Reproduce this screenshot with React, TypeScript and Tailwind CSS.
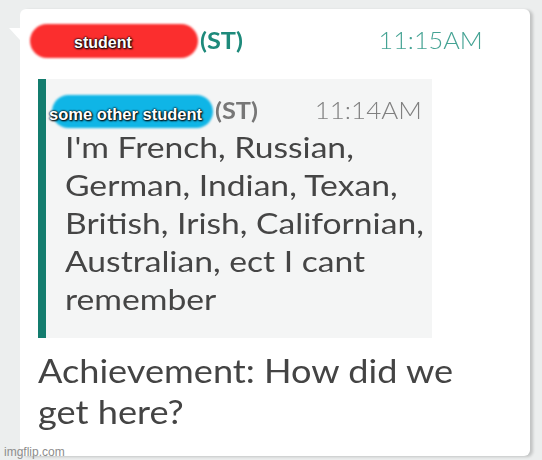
import React from "react";

const lato = { fontFamily: "Lato, 'Open Sans', sans-serif" };
const label = {
  fontFamily: "'Liberation Sans', Arial, sans-serif",
  textShadow: "0 0 2px #000, 0 0 2px #000, 1px 1px 2px #000",
};

export default function App() {
  return (
    <div className="relative w-[542px] h-[460px] overflow-hidden bg-[#eceeee]" style={lato}>
      <div className="relative ml-[20px] mt-[9px] w-[510px] h-[447px] rounded-[6px] bg-white shadow-[3px_1px_3px_rgba(0,0,0,0.18)]">
        {/* bubble tail */}
        <div className="absolute left-[-11px] top-[19px] w-0 h-0 border-b-[12px] border-r-[11px] border-b-transparent border-r-white" />
        {/* header */}
        <div className="flex items-center h-[68px] pl-[10px] pr-[47px] pb-[5px]">
          <div className="relative w-[168px] h-[34px]">
            <div className="absolute inset-0 rounded-[18px] bg-[#fb2e2e] blur-[1px]" />
            <span className="absolute left-[44px] top-[7px] text-[16px] font-bold text-white" style={label}>
              student
            </span>
          </div>
          <span className="ml-[2px] inline-block origin-left scale-x-[1.1] text-[23px] font-bold text-[#1e8a7b]">(ST)</span>
          <span className="ml-auto inline-block origin-right scale-x-[1.1] text-[23px] font-light text-[#45a394]">11:15AM</span>
        </div>
        {/* quote */}
        <div className="ml-[18px] w-[394px] h-[259px] mt-[2px] flex border-l-[8px] border-[#137c6e] bg-[#f4f5f5]">
          <div className="flex-1 flex flex-col">
            <div className="flex items-center pl-[6px] pr-[10px] mt-[13px] h-[36px]">
              <div className="relative w-[161px] h-[33px] mt-[2px]">
                <div className="absolute inset-0 rounded-[17px] bg-[#0fb5e6] blur-[1px]" />
                <span className="absolute left-[-3px] top-[9px] text-[16.5px] leading-[20px] font-bold text-white whitespace-nowrap" style={label}>
                  some other student
                </span>
              </div>
              <span className="ml-[2px] inline-block origin-left scale-x-[1.1] text-[23px] font-bold text-[#777777]">(ST)</span>
              <span className="ml-auto inline-block origin-right scale-x-[1.13] text-[23px] font-light text-[#808080]">11:14AM</span>
            </div>
            <div className="pl-[19px] mt-[0px]">
              <div className="inline-block origin-left scale-x-[1.16] text-[29px] leading-[38px] text-[#454545] whitespace-nowrap">
                I'm French, Russian,<br />
                German, Indian, Texan,<br />
                British, Irish, Californian,<br />
                Australian, ect I cant<br />
                remember
              </div>
            </div>
          </div>
        </div>
        {/* body */}
        <div className="pl-[18px] mt-[12px]">
          <div className="inline-block origin-left scale-x-[1.13] text-[32px] leading-[41px] text-[#444444] whitespace-nowrap">
            Achievement: How did we<br />
            get here?
          </div>
        </div>
      </div>
      <div className="absolute left-[4px] top-[443px] text-[12px] text-[#8d8d8d]" style={{ fontFamily: "'Liberation Sans', Arial, sans-serif" }}>
        imgflip.com
      </div>
    </div>
  );
}
